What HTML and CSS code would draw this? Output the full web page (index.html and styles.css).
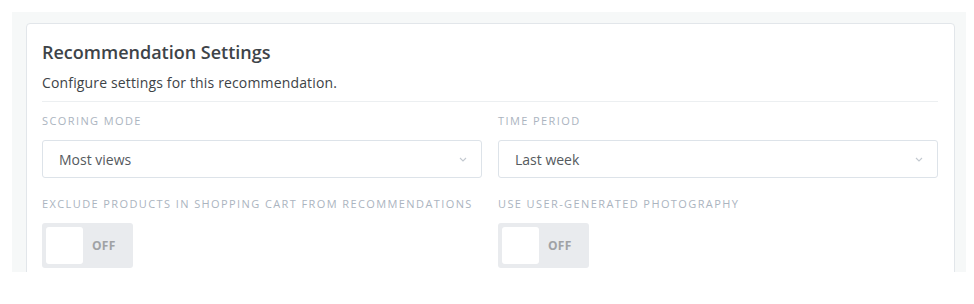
FILE: index.html
```html
<!DOCTYPE html>
<html lang="en">
<head>
    <meta charset="UTF-8">
    <meta name="viewport" content="width=device-width, initial-scale=1.0">
    <title>Recommendation Settings</title>
    <link rel="stylesheet" href="styles.css">
</head>
<body>
    <div class="panel">
        <div class="card">
            <h1>Recommendation Settings</h1>
            <p class="intro">Configure settings for this recommendation.</p>
            <div class="fields">
                <div class="field">
                    <label for="scoringMode">Scoring mode</label>
                    <div class="select">
                        <span>Most views</span>
                        <svg width="8" height="5" viewBox="0 0 8 5"><path d="M1 1l3 3 3-3" fill="none" stroke="#c3c9d0" stroke-width="1.1"/></svg>
                    </div>
                </div>
                <div class="field">
                    <label for="timePeriod">Time period</label>
                    <div class="select">
                        <span>Last week</span>
                        <svg width="8" height="5" viewBox="0 0 8 5"><path d="M1 1l3 3 3-3" fill="none" stroke="#c3c9d0" stroke-width="1.1"/></svg>
                    </div>
                </div>
                <div class="field">
                    <label>Exclude products in shopping cart from recommendations</label>
                    <div class="toggle">
                        <span class="knob"></span>
                        <span class="state">OFF</span>
                    </div>
                </div>
                <div class="field">
                    <label>Use user-generated photography</label>
                    <div class="toggle">
                        <span class="knob"></span>
                        <span class="state">OFF</span>
                    </div>
                </div>
            </div>
        </div>
    </div>
</body>
</html>
```

FILE: styles.css
```css
body {
    font-family: "Open Sans", "Liberation Sans", sans-serif;
    margin: 0;
    padding: 12px 8px 12px 12px;
    background-color: #fff;
}
.panel {
    background-color: #f6f8f8;
    padding: 11px 11px 0 14px;
    height: 249px;
    overflow: hidden;
}
.card {
    background: #fff;
    border: 1px solid #e2e6ea;
    border-radius: 4px;
    padding: 16px 16px 30px 15px;
}
h1 {
    margin: 0;
    font-size: 18px;
    line-height: 24px;
    font-weight: 600;
    color: #3e4449;
}
.intro {
    margin: 10px 0 0;
    font-size: 14px;
    line-height: 18px;
    letter-spacing: 0.15px;
    color: #3d4347;
    padding-bottom: 9px;
    border-bottom: 1px solid #eceff1;
}
.fields {
    display: grid;
    grid-template-columns: 1fr 1fr;
    column-gap: 16px;
    row-gap: 19px;
    padding-top: 12px;
}
.field label {
    display: block;
    font-size: 11px;
    line-height: 14px;
    letter-spacing: 1.4px;
    text-transform: uppercase;
    color: #abb4c0;
    margin-bottom: 12px;
    white-space: nowrap;
}
.select {
    display: flex;
    align-items: center;
    justify-content: space-between;
    height: 36px;
    padding: 0 14px 0 16px;
    border: 1px solid #dde3e9;
    border-radius: 3px;
    font-size: 14px;
    color: #555a5e;
}
.toggle {
    display: flex;
    align-items: center;
    width: 83px;
    height: 37px;
    padding: 4px;
    background: #e9ebee;
    border-radius: 3px;
}
.knob {
    width: 37px;
    height: 37px;
    background: #fff;
    border-radius: 3px;
}
.state {
    margin-left: 9px;
    font-size: 12px;
    font-weight: 700;
    letter-spacing: 0.3px;
    color: #a0a2a5;
}
```
